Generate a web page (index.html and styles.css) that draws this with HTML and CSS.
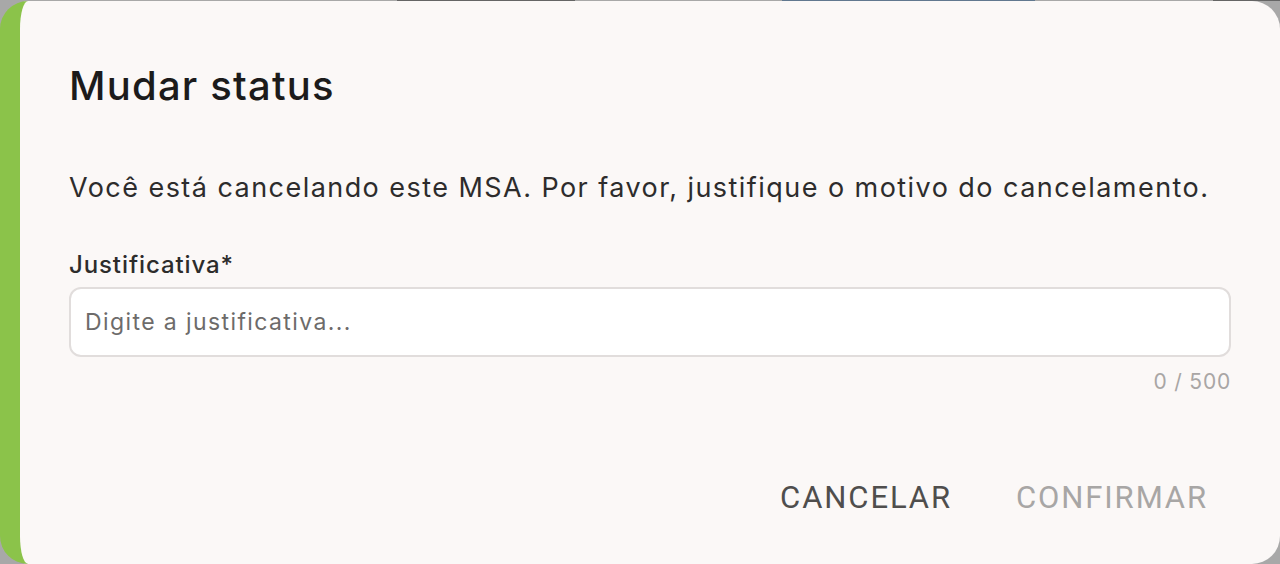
FILE: index.html
```html
<!DOCTYPE html>
<html lang="pt-BR">
<head>
<meta charset="utf-8">
<title>Mudar status</title>
<link rel="stylesheet" href="styles.css">
</head>
<body>
<div class="page">
  <div class="page-row">
    <span class="bit bit-a"></span>
    <span class="bit bit-b"></span>
    <span class="bit bit-c"></span>
  </div>
</div>
<div class="backdrop"></div>
<div class="dialog" role="dialog" aria-labelledby="dlg-title">
  <h2 class="dialog-title" id="dlg-title">Mudar status</h2>
  <p class="dialog-text">Você está cancelando este MSA. Por favor, justifique o motivo do cancelamento.</p>
  <label class="field-label" for="just">Justificativa*</label>
  <input class="field-input" id="just" type="text" placeholder="Digite a justificativa...">
  <div class="field-counter">0 / 500</div>
  <div class="dialog-actions">
    <button class="btn btn-cancel" type="button">Cancelar</button>
    <button class="btn btn-confirm" type="button" disabled>Confirmar</button>
  </div>
</div>
</body>
</html>
```

FILE: styles.css
```css
* { box-sizing: border-box; }
html, body {
  margin: 0;
  padding: 0;
  width: 1280px;
  height: 564px;
  overflow: hidden;
}
body {
  background: #ffffff;
  font-family: "Inter", "Noto Sans", sans-serif;
}
.page {
  width: 1280px;
  height: 564px;
}
.page-row {
  display: flex;
  height: 2px;
  padding-left: 397px;
}
.bit { height: 1px; display: block; }
.bit-a { width: 178px; background: #555; opacity: 0.6; margin-right: 207px; }
.bit-b { width: 253px; background: #2a6fb5; opacity: 0.5; margin-right: 178px; }
.bit-c { width: 67px; background: #555; opacity: 0.6; }
.backdrop {
  position: fixed;
  inset: 0;
  background: rgba(0, 0, 0, 0.34);
}
.dialog {
  position: fixed;
  left: 0;
  top: 1px;
  width: 1280px;
  height: 563px;
  background: #fbf8f7;
  border-left: 20px solid #8bc34a;
  border-radius: 28px;
  padding: 61px 49px 0 49px;
  display: flex;
  flex-direction: column;
}
.dialog-title {
  margin: 0;
  font-size: 40px;
  line-height: 48px;
  font-weight: 500;
  color: #1c1b1b;
  letter-spacing: 1.2px;
}
.dialog-text {
  margin: 60px 0 0 0;
  font-size: 27px;
  line-height: 36px;
  font-weight: 400;
  color: #2d2c2c;
  letter-spacing: 1.45px;
}
.field-label {
  margin-top: 44px;
  font-size: 24px;
  line-height: 30px;
  font-weight: 500;
  color: #2d2c2b;
  letter-spacing: 0.9px;
}
.field-input {
  margin-top: 7px;
  width: 100%;
  height: 70px;
  border: 2px solid #e1dddc;
  border-radius: 12px;
  background: #ffffff;
  padding: 0 14px;
  font-family: "Inter", "Noto Sans", sans-serif;
  font-size: 23px;
  color: #333;
  letter-spacing: 1.4px;
  outline: none;
}
.field-input::placeholder { color: #6d6b6a; opacity: 1; }
.field-counter {
  margin-top: 12px;
  text-align: right;
  font-size: 21px;
  line-height: 26px;
  color: #a9a6a5;
  letter-spacing: 0.8px;
}
.dialog-actions {
  margin-top: 85px;
  display: flex;
  justify-content: flex-end;
  gap: 32px;
  padding-right: 7px;
}
.btn {
  border: 0;
  background: transparent;
  padding: 0 16px;
  font-family: "Roboto", "Liberation Sans", sans-serif;
  font-size: 31px;
  line-height: 36px;
  text-transform: uppercase;
  letter-spacing: 1.9px;
  cursor: pointer;
}
.btn-cancel { color: #4f4e4d; }
.btn-confirm { color: #a8a6a5; cursor: default; }
```
